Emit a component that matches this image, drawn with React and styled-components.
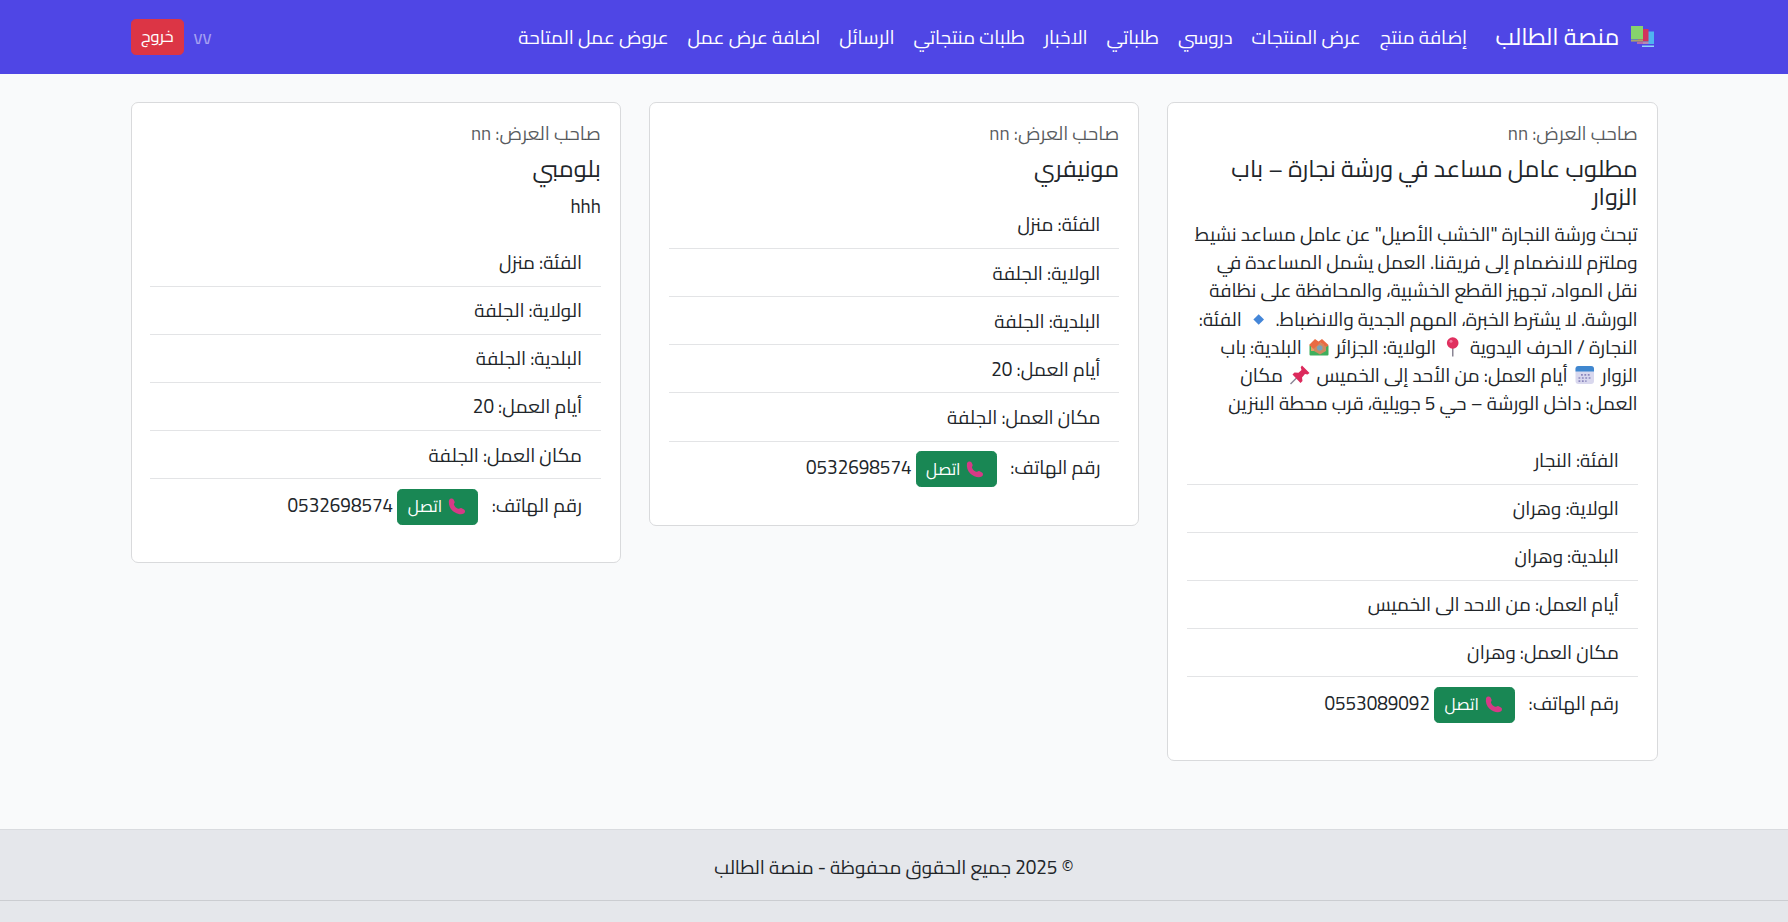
import React from 'react';
import styled, { createGlobalStyle } from 'styled-components';

const Global = createGlobalStyle`
  *, *::before, *::after { box-sizing: border-box; }
  html { font-size: 18.85px; }
  body {
    margin: 0;
    background: #f9fafb;
    color: #212529;
    font-family: Cairo, "DejaVu Sans", sans-serif;
    font-size: 1rem;
    line-height: 1.5;
    overflow: hidden;
  }
`;

const Page = styled.div`
  height: 922px;
  display: flex;
  flex-direction: column;
  overflow: hidden;
`;

const Navbar = styled.header`
  flex: none;
  height: 73.5px;
  background: #4f46e5;
  color: #fff;
`;

const Container = styled.div`
  width: 1527px;
  margin: 0 auto;
`;

const NavInner = styled(Container)`
  height: 100%;
  display: flex;
  align-items: center;
`;

const Brand = styled.a`
  display: flex;
  align-items: center;
  gap: 10px;
  font-size: 1.25rem;
  white-space: nowrap;
  margin-left: 1rem;
  padding-right: 3px;
`;

const NavLinks = styled.nav`
  display: flex;
  flex: 1;
`;

const NavLink = styled.a`
  padding: 0.5rem;
  white-space: nowrap;
`;

const UserName = styled.span`
  color: rgba(255, 255, 255, 0.5);
  margin-left: 0.5rem;
`;

const Button = styled.button`
  display: inline-block;
  border: 1px solid ${(p) => p.$color};
  border-radius: 0.25rem;
  background: ${(p) => p.$color};
  color: #fff;
  font-family: inherit;
  font-size: 0.875rem;
  line-height: 1.5;
  padding: 0.25rem 0.5rem;
  vertical-align: middle;
`;

const CallButton = styled(Button)`
  margin-right: 0.5rem;
`;

const Cards = styled(Container)`
  padding-top: 28.5px;
  flex: 1;
  display: grid;
  grid-template-columns: repeat(3, 1fr);
  gap: 28.3px;
  align-items: start;
`;

const Card = styled.article`
  background: #fff;
  border: 1px solid #d9dadc;
  border-radius: 0.375rem;
  padding: 1rem;
`;

const Owner = styled.h6`
  margin: 0 0 0.5rem;
  color: rgba(33, 37, 41, 0.75);
  font-size: 1rem;
  font-weight: 400;
  line-height: 1.2;
`;

const Title = styled.h5`
  margin: 0 0 0.5rem;
  font-size: 1.25rem;
  font-weight: 400;
  line-height: 1.2;
`;

const Description = styled.p`
  margin: 0 0 1rem;
`;

const List = styled.ul`
  list-style: none;
  margin: 0 0 0.5rem;
  padding: 0;
`;

const Item = styled.li`
  padding: 0.5rem 1rem;
  border-bottom: 1px solid #e3e4e6;
  &:last-child { border-bottom: 0; }
`;

const Footer = styled.footer`
  flex: none;
  height: 93.5px;
  background: #e5e7eb;
  border-top: 1px solid #d9dbdf;
`;

const Copyright = styled.div`
  height: 71.5px;
  padding-top: 4px;
  display: flex;
  align-items: center;
  justify-content: center;
  border-bottom: 1px solid #cbcdd1;
`;

const Icon = styled.svg`
  width: ${(p) => p.$w || 25.5}px;
  height: ${(p) => p.$h || 20}px;
  vertical-align: -3px;
  overflow: visible;
`;

const Books = () => (
  <Icon $w={25} $h={22} viewBox="0 0 25 22">
    <path d="M13 5.500h11V18H13z" fill="#4fb4f0" />
    <path d="M12 19.500h12v1.500H12z" fill="#8fd8fa" />
    <path d="M8 3h10.500v12.500H8z" fill="#d2335c" />
    <path d="M7 16.300h11.500v1.400H7z" fill="#e07a98" />
    <path d="M1 0h12v13.500H1z" fill="#86d36c" />
    <path d="M1 14h12v1.600H1z" fill="#a9a06c" />
  </Icon>
);

const Diamond = () => (
  <Icon viewBox="0 0 25.5 20">
    <path d="M12.700 5.200l5.300 5.300-5.300 5.300-5.300-5.300z" fill="#4486d8" />
  </Icon>
);

const RoundPin = () => (
  <Icon viewBox="0 0 25.5 20">
    <path d="M12 10h1.500v9.500H12z" fill="#8a8594" />
    <circle cx="12.7" cy="6" r="5.800" fill="#e0305f" />
    <circle cx="11" cy="4.200" r="1.500" fill="#f4789f" />
  </Icon>
);

const Houses = () => (
  <Icon viewBox="0 0 25.5 20">
    <rect x="3.500" y="8" width="19" height="10.500" rx="1" fill="#3fae5c" />
    <path d="M5 8l5-4 4 3v7H5z" fill="#e2a066" />
    <path d="M8 10l6-5 6 4v5l-6 3.500L8 14z" fill="#cf8a60" />
    <path d="M3 8l6-6 3.500 2.500L16 2l6.500 6-2 2-6-4.500-7 6.500-2-2z" fill="#e96b43" />
    <circle cx="13.800" cy="11" r="2.800" fill="#7aa3b8" />
  </Icon>
);

const Calendar = () => (
  <Icon viewBox="0 0 25.5 20">
    <rect x="3.500" y="1" width="18.500" height="18" rx="3" fill="#d9d8ee" />
    <path d="M3.500 6.500V4a3 3 0 0 1 3-3H19a3 3 0 0 1 3 3v2.500z" fill="#3f87cf" />
    <path d="M9 9.800h10M6.500 13h12.500M6.500 16.200h8" stroke="#8a86bd" strokeWidth="1.700" strokeDasharray="1.800 1.600" />
  </Icon>
);

const PushPin = () => (
  <Icon viewBox="0 0 25.5 20">
    <path d="M10 12.500L3.500 19" stroke="#8a8594" strokeWidth="1.500" />
    <path d="M15 .5l7.500 7.500-2 1.500-2.500-.5-3 3.500.5 3.500-2 2L5.500 9.500l2-2 4 .3L14.500 5l-.8-2.800z" fill="#dc2a5c" />
  </Icon>
);

const Phone = () => (
  <Icon $w={22} $h={17} viewBox="0 0 22 17">
    <path d="M3 2.200C3.700.3 6.400-.3 7.600 1.600l1 2.200c.5 1.200-1 2-.6 3 .7 1.900 2.200 3.300 4 4 1.200.4 2-1.100 3.200-.7l2.800 1.300c1.500.8 1.300 3.200-.3 4.200C12.500 18.300 1.300 12.300 3 2.200z" fill="#d63a86" />
  </Icon>
);

const links = ['إضافة منتج', 'عرض المنتجات', 'دروسي', 'طلباتي', 'الاخبار', 'طلبات منتجاتي', 'الرسائل', 'اضافة عرض عمل', 'عروض عمل المتاحة'];

const jobs = [
  {
    title: 'مطلوب عامل مساعد في ورشة نجارة – باب الزوار',
    description: (
      <>
        تبحث ورشة النجارة "الخشب الأصيل" عن عامل مساعد نشيط وملتزم للانضمام إلى فريقنا. العمل يشمل المساعدة في نقل المواد، تجهيز القطع الخشبية، والمحافظة على نظافة الورشة. لا يشترط الخبرة، المهم الجدية والانضباط. <Diamond /> الفئة: النجارة / الحرف اليدوية <RoundPin /> الولاية: الجزائر <Houses /> البلدية: باب الزوار <Calendar /> أيام العمل: من الأحد إلى الخميس <PushPin /> مكان العمل: داخل الورشة – حي 5 جويلية، قرب محطة البنزين
      </>
    ),
    details: ['الفئة: النجار', 'الولاية: وهران', 'البلدية: وهران', 'أيام العمل: من الاحد الى الخميس', 'مكان العمل: وهران'],
    phone: '0553089092',
  },
  {
    title: 'مونيفري',
    details: ['الفئة: منزل', 'الولاية: الجلفة', 'البلدية: الجلفة', 'أيام العمل: 20', 'مكان العمل: الجلفة'],
    phone: '0532698574',
  },
  {
    title: 'بلومبي',
    description: 'hhh',
    details: ['الفئة: منزل', 'الولاية: الجلفة', 'البلدية: الجلفة', 'أيام العمل: 20', 'مكان العمل: الجلفة'],
    phone: '0532698574',
  },
];

export default function App() {
  return (
    <Page dir="rtl" lang="ar">
      <Global />
      <Navbar>
        <NavInner>
          <Brand><Books />منصة الطالب</Brand>
          <NavLinks>{links.map((l) => <NavLink key={l}>{l}</NavLink>)}</NavLinks>
          <UserName>vv</UserName>
          <Button $color="#dc3545">خروج</Button>
        </NavInner>
      </Navbar>
      <Cards as="main">
        {jobs.map((job) => (
          <Card key={job.title}>
            <Owner>صاحب العرض: nn</Owner>
            <Title>{job.title}</Title>
            <Description>{job.description}</Description>
            <List>
              {job.details.map((d) => <Item key={d}>{d}</Item>)}
              <Item>
                رقم الهاتف: <CallButton $color="#198754"><Phone /> اتصل</CallButton> {job.phone}
              </Item>
            </List>
          </Card>
        ))}
      </Cards>
      <Footer>
        <Copyright>© 2025 جميع الحقوق محفوظة - منصة الطالب</Copyright>
      </Footer>
    </Page>
  );
}
